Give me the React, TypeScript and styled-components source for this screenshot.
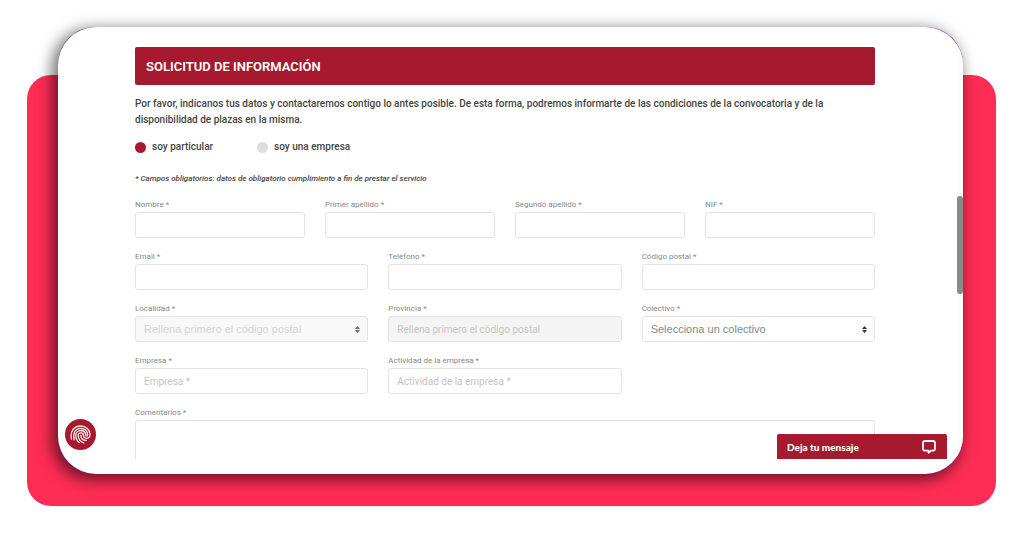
import React from "react";
import styled, { createGlobalStyle } from "styled-components";

const crimson = "#a6192e";
const sans = 'Roboto, "Open Sans", sans-serif';
const arial = '"Liberation Sans", sans-serif';

const GlobalStyle = createGlobalStyle`
  *, *::before, *::after { box-sizing: border-box; }
  body { margin: 0; background: #fff; color: #444; font-family: ${sans}; }
`;

const Page = styled.div`
  display: flow-root;
`;

const Backdrop = styled.div`
  margin: 75px 28px 30px 27px;
  padding: 0 33px 32px 31px;
  display: flow-root;
  border-radius: 24px;
  background: #ff2d55;
`;

const Card = styled.main`
  position: relative;
  margin-top: -48px;
  border-radius: 37px;
  background: #6b2fa0;
  box-shadow: -4px 4px 15px 2px rgba(0, 0, 0, 0.56);
`;

const Screen = styled.div`
  display: flex;
  padding-bottom: 15px;
  border-radius: 38px;
  background: #fff;
  overflow: hidden;
`;

const Form = styled.form`
  flex: 1;
  min-width: 0;
  padding: 20px 82px 0 77px;
`;

const ScrollTrack = styled.div`
  width: 6px;
  padding-top: 169px;
  background: #fcfcfc;
`;

const ScrollThumb = styled.div`
  height: 98px;
  border-radius: 3px;
  background: #8a8a8a;
`;

const Title = styled.h1`
  margin: 0 0 11px;
  padding: 1px 11px 0;
  border-radius: 2px;
  background: ${crimson};
  color: #fff;
  font-size: 13px;
  font-weight: 600;
  line-height: 37px;
`;

const Intro = styled.p`
  margin: 0 0 11px;
  font-size: 10px;
  font-weight: 500;
  line-height: 16px;
`;

const Choices = styled.div`
  display: flex;
  gap: 44px;
  margin-bottom: 18px;
`;

const Choice = styled.label`
  display: flex;
  align-items: center;
  gap: 6px;
  font-size: 10px;
  font-weight: 500;
  line-height: 16px;
`;

const Radio = styled.input`
  appearance: none;
  width: 11px;
  height: 11px;
  margin: 0;
  border-radius: 50%;
  background: #ddd;
  &:checked { background: ${crimson}; }
`;

const Note = styled.p`
  margin: 0 0 14px;
  font-size: 8px;
  font-style: italic;
  font-weight: 500;
  line-height: 12px;
`;

const Row = styled.div<{ $columns: number }>`
  display: grid;
  grid-template-columns: repeat(${(p) => p.$columns}, minmax(0, 1fr));
  column-gap: 20px;
  margin-bottom: 13px;
`;

const Field = styled.div`
  display: flex;
  flex-direction: column;
  gap: 1px;
`;

const Label = styled.label`
  color: #888;
  font-size: 8px;
  line-height: 12px;
`;

const Input = styled.input`
  width: 100%;
  height: 26px;
  padding: 0 8px;
  border: 1px solid #e3e3e3;
  border-radius: 3px;
  background: #fff;
  color: #777;
  font-family: ${sans};
  font-size: 10px;
  &::placeholder { color: #c4c4c4; opacity: 1; }
  &:disabled { background: #f4f4f4; }
`;

const SelectBox = styled.div`
  position: relative;
`;

const Select = styled.select`
  display: block;
  appearance: none;
  width: 100%;
  height: 26px;
  padding: 0 20px 0 8px;
  border: 1px solid #e3e3e3;
  border-radius: 3px;
  background: #fff;
  color: #888;
  font-family: ${arial};
  font-size: 11px;
  opacity: 1;
  &:disabled { background: #f8f8f8; color: #d4d4d4; }
`;

const Caret = styled.svg`
  position: absolute;
  top: 10px;
  right: 8px;
  pointer-events: none;
`;

const Comments = styled.textarea`
  display: block;
  width: 100%;
  height: 39px;
  border: 1px solid #e3e3e3;
  border-bottom: 0;
  border-radius: 3px 3px 0 0;
  resize: none;
`;

const Privacy = styled.button`
  position: absolute;
  left: 7px;
  bottom: 24px;
  display: grid;
  place-items: center;
  width: 31px;
  height: 31px;
  padding: 0;
  border: 0;
  border-radius: 50%;
  background: ${crimson};
`;

const Chat = styled.button`
  position: absolute;
  right: 16px;
  bottom: 15px;
  display: flex;
  align-items: center;
  justify-content: space-between;
  width: 170px;
  height: 25px;
  padding: 0 11px 0 10px;
  border: 0;
  border-radius: 2px 2px 0 0;
  background: ${crimson};
  color: #fff;
  font: 900 10px Lato, ${sans};
`;

function TextField({ id, label, placeholder, disabled }: {
  id: string; label: string; placeholder?: string; disabled?: boolean;
}) {
  return (
    <Field>
      <Label htmlFor={id}>{label}</Label>
      <Input id={id} type="text" placeholder={placeholder} disabled={disabled} />
    </Field>
  );
}

function SelectField({ id, label, option, disabled }: {
  id: string; label: string; option: string; disabled?: boolean;
}) {
  return (
    <Field>
      <Label htmlFor={id}>{label}</Label>
      <SelectBox>
        <Select id={id} disabled={disabled}>
          <option>{option}</option>
        </Select>
        <Caret width="5" height="7" viewBox="0 0 5 7" fill={disabled ? "#666" : "#333"} aria-hidden="true">
          <path d="M2.5 0 5 3H0zM2.5 7 0 4h5z" />
        </Caret>
      </SelectBox>
    </Field>
  );
}

export default function App() {
  return (
    <Page>
      <GlobalStyle />
      <Backdrop>
        <Card>
          <Screen>
            <Form>
              <Title>SOLICITUD DE INFORMACIÓN</Title>
              <Intro>
                Por favor, indícanos tus datos y contactaremos contigo lo antes posible. De esta forma, podremos
                informarte de las condiciones de la convocatoria y de la<br />disponibilidad de plazas en la misma.
              </Intro>
              <Choices>
                <Choice><Radio type="radio" name="tipo" defaultChecked />soy particular</Choice>
                <Choice><Radio type="radio" name="tipo" />soy una empresa</Choice>
              </Choices>
              <Note>* Campos obligatorios: datos de obligatorio cumplimiento a fin de prestar el servicio</Note>
              <Row $columns={4}>
                <TextField id="nombre" label="Nombre *" />
                <TextField id="apellido1" label="Primer apellido *" />
                <TextField id="apellido2" label="Segundo apellido *" />
                <TextField id="nif" label="NIF *" />
              </Row>
              <Row $columns={3}>
                <TextField id="email" label="Email *" />
                <TextField id="telefono" label="Teléfono *" />
                <TextField id="cp" label="Código postal *" />
              </Row>
              <Row $columns={3}>
                <SelectField id="localidad" label="Localidad *" option="Rellena primero el código postal" disabled />
                <TextField id="provincia" label="Provincia *" placeholder="Rellena primero el código postal" disabled />
                <SelectField id="colectivo" label="Colectivo *" option="Selecciona un colectivo" />
              </Row>
              <Row $columns={3}>
                <TextField id="empresa" label="Empresa *" placeholder="Empresa *" />
                <TextField id="actividad" label="Actividad de la empresa *" placeholder="Actividad de la empresa *" />
              </Row>
              <Field>
                <Label htmlFor="comentarios">Comentarios *</Label>
                <Comments id="comentarios" />
              </Field>
            </Form>
            <ScrollTrack><ScrollThumb /></ScrollTrack>
          </Screen>
          <Privacy type="button" aria-label="Privacidad">
            <svg width="21" height="19" viewBox="0 0 21 19" fill="none" stroke="#fbe9ec" strokeWidth="1.3" strokeLinecap="round" aria-hidden="true">
              <path d="M1.500 14C-.2 6.500 4 1 10.500 1 16 1 20 4.600 20 9.300c0 2.600-1.300 4-3.300 4s-3.200-1.200-3.300-3.200c-.1-1.400-1.100-2.300-2.600-2.300-1.700 0-2.700 1.200-2.600 3 .2 3.300 2.200 5.900 5.600 7" />
              <path d="M4.200 14.800C2.600 8.500 5 3.300 10.600 3.300c4 0 6.900 2.500 6.900 6" />
              <path d="M9.300 17.600c-2.300-1.900-3.500-4.300-3.500-7.200 0-2.900 2-4.900 4.900-4.900 2.600 0 4.700 1.700 4.900 4.500.1.900.5 1.200 1 1.200.7 0 1-.6.900-1.900" />
              <path d="M10.800 10.400c.2 3.300 2.400 5.200 5.600 5" />
            </svg>
          </Privacy>
          <Chat type="button">
            Deja tu mensaje
            <svg width="14" height="14" viewBox="0 0 14 14" fill="none" stroke="#fff" strokeWidth="1.800" strokeLinejoin="round" aria-hidden="true">
              <path d="M3.200 1h7.600Q13 1 13 3.200v5.300Q13 10.700 10.800 10.700H9L6.500 12.700V10.700H3.200Q1 10.700 1 8.500V3.200Q1 1 3.200 1z" />
            </svg>
          </Chat>
        </Card>
      </Backdrop>
    </Page>
  );
}
